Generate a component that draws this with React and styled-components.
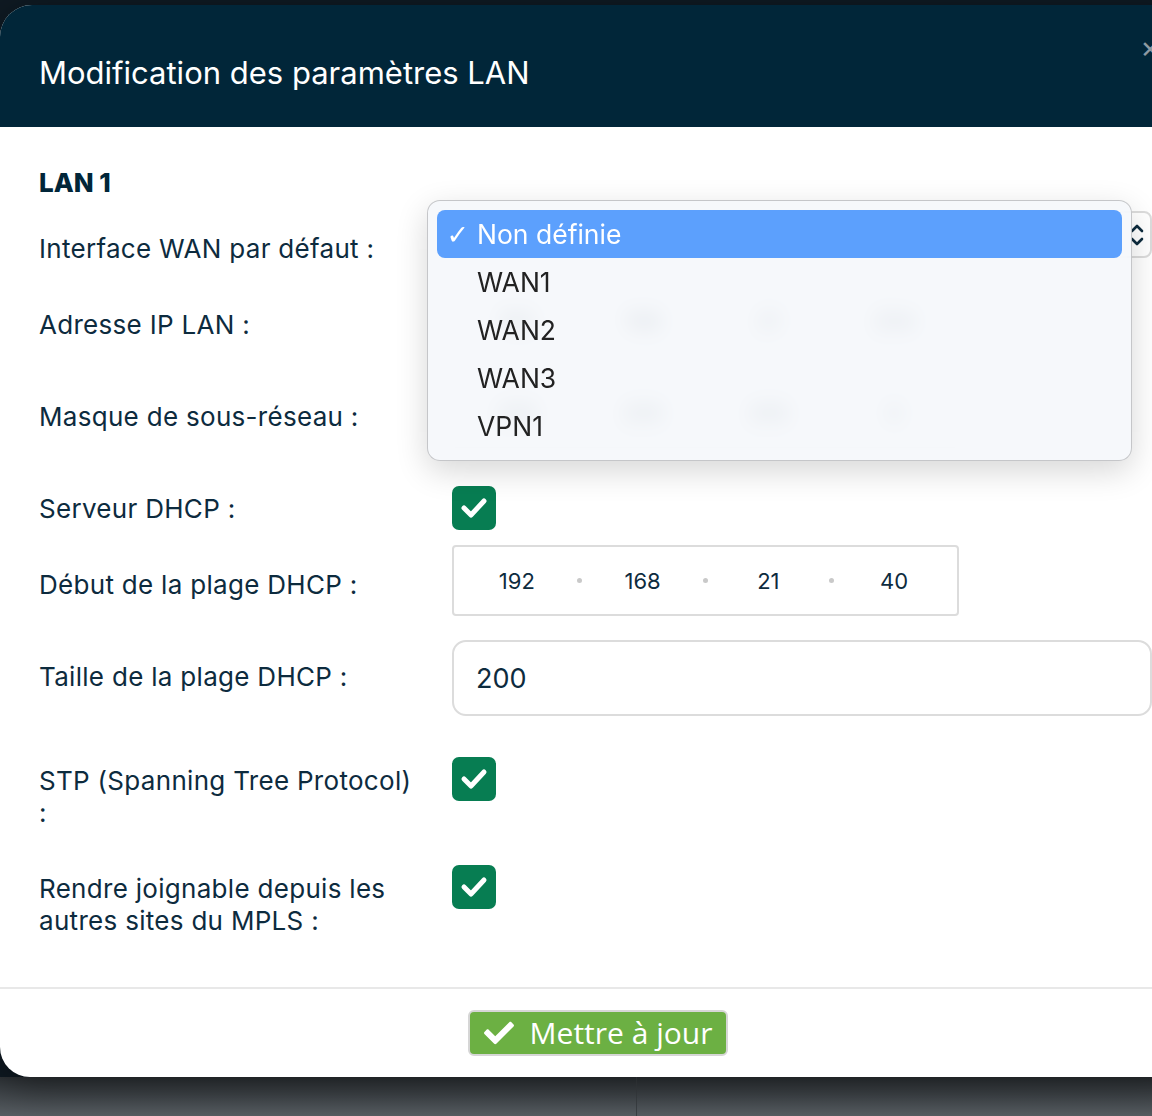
import React from "react";
import styled, { createGlobalStyle } from "styled-components";
import { FaCheck } from "react-icons/fa";

const GlobalStyle = createGlobalStyle`
  html, body { margin: 0; padding: 0; overflow: hidden; }
  body { background: #0f1a23; font-family: Inter, "Noto Sans", sans-serif; }
`;

const Page = styled.div`
  width: 1152px;
  height: 1116px;
  overflow: hidden;
  display: flex;
  flex-direction: column;
  padding-top: 5px;
  box-sizing: border-box;
`;

const Modal = styled.div`
  position: relative;
  flex-shrink: 0;
  width: 1196px;
  background: #fff;
  border-radius: 32px 32px 30px 30px;
  overflow: hidden;
  box-shadow: 0 10px 40px rgba(0, 0, 0, 0.45);
`;

const Header = styled.div`
  height: 122px;
  box-sizing: border-box;
  background: #012639;
  display: flex;
  align-items: center;
  justify-content: space-between;
  padding: 12px 36px 0 39px;
`;

const Title = styled.h1`
  margin: 0;
  font-size: 31px;
  font-weight: 400;
  color: #fff;
`;

const Close = styled.span`
  color: #8d99a3;
  font-size: 30px;
  line-height: 1;
  margin-top: -50px;
`;

const Body = styled.div`
  padding: 40px 0 50px 39px;
`;

const Section = styled.h2`
  margin: 0;
  font-size: 26px;
  line-height: 32px;
  font-weight: 800;
  color: #012639;
`;

const Row = styled.div`
  display: grid;
  grid-template-columns: 413px 700px;
  align-items: start;
  margin-top: ${(p) => p.$mt}px;
`;

const Label = styled.div`
  padding: ${(p) => p.$pt}px 28px 0 0;
  font-size: 26px;
  line-height: 32px;
  letter-spacing: 0.3px;
  color: #0d2b3e;
`;

const Select = styled.div`
  height: 47px;
  box-sizing: border-box;
  border: 2px solid #dcdcdc;
  border-radius: 8px;
  display: flex;
  align-items: center;
  justify-content: flex-end;
  padding-right: 5px;
  color: #0d2b3e;
`;

const IpBox = styled.div`
  width: 507px;
  height: 71px;
  box-sizing: border-box;
  border: 2px solid #dcdcdc;
  border-radius: 4px;
  display: flex;
  align-items: center;
`;

const Segment = styled.span`
  flex: 1;
  text-align: center;
  font-size: 22px;
  color: #0d2b3e;
`;

const Dot = styled.span`
  width: 0;
  display: flex;
  justify-content: center;
  &::before {
    content: "";
    flex-shrink: 0;
    width: 5px;
    height: 5px;
    border-radius: 50%;
    background: #c9c9c9;
  }
`;

const TextInput = styled.div`
  height: 76px;
  box-sizing: border-box;
  border: 2px solid #dcdcdc;
  border-radius: 14px;
  display: flex;
  align-items: center;
  padding-left: 22px;
  font-size: 27px;
  color: #0d2b3e;
`;

const Checkbox = styled.div`
  width: 44px;
  height: 44px;
  border-radius: 7px;
  background: #077d52;
  display: flex;
  align-items: center;
  justify-content: center;
`;

const Footer = styled.div`
  border-top: 2px solid #e8e8e8;
  padding: 21px 0;
  display: flex;
  justify-content: center;
`;

const Button = styled.button`
  height: 46px;
  box-sizing: border-box;
  border: 2px solid #d6d6d6;
  border-radius: 6px;
  background: #6cb043;
  color: #fff;
  display: flex;
  align-items: center;
  gap: 16px;
  padding: 0 14px 0 14px;
  font-family: "Open Sans", sans-serif;
  font-size: 30px;
  line-height: 1;
`;

const Popup = styled.div`
  position: absolute;
  top: 195px;
  left: 427px;
  width: 705px;
  height: 261px;
  box-sizing: border-box;
  padding: 9px 9px;
  border: 1px solid rgba(0, 0, 0, 0.2);
  border-radius: 13px;
  background: rgba(245, 247, 250, 0.86);
  backdrop-filter: blur(10px);
  box-shadow: 0 10px 32px rgba(0, 0, 0, 0.16);
`;

const Option = styled.div`
  height: 48px;
  display: flex;
  align-items: center;
  border-radius: 8px;
  font-size: 26.5px;
  color: ${(p) => (p.$active ? "#fff" : "#222")};
  background: ${(p) => (p.$active ? "#5ca0fd" : "transparent")};
`;

const Tick = styled.span`
  width: 40px;
  text-align: right;
  padding-right: 8px;
  box-sizing: border-box;
  font-family: "DejaVu Sans", sans-serif;
  font-weight: bold;
  font-size: 27px;
`;

const Shade = styled.div`
  flex: 1;
  display: flex;
  padding-left: 636px;
  background: linear-gradient(#2f3438, #585e63);
`;

const Divider = styled.div`
  width: 1px;
  background: #3b4044;
`;

const Check = () => (
  <svg width="28" height="24" viewBox="0 0 28 24">
    <polyline points="4,12 11,19 24,5" fill="none" stroke="#fff" strokeWidth="5" strokeLinecap="round" strokeLinejoin="round" />
  </svg>
);

const Chevrons = () => (
  <svg width="16" height="28" viewBox="0 0 16 28">
    <path d="M3 10 L8 5 L13 10 M3 18 L8 23 L13 18" fill="none" stroke="#0d2b3e" strokeWidth="2.6" strokeLinecap="round" strokeLinejoin="round" />
  </svg>
);

function Ip({ parts }) {
  return (
    <IpBox>
      {parts.map((p, i) => (
        <React.Fragment key={i}>
          {i > 0 && <Dot />}
          <Segment>{p}</Segment>
        </React.Fragment>
      ))}
    </IpBox>
  );
}

const options = ["Non définie", "WAN1", "WAN2", "WAN3", "VPN1"];

export default function App() {
  return (
    <Page>
      <GlobalStyle />
      <Modal>
        <Header>
          <Title>Modification des paramètres LAN</Title>
          <Close>×</Close>
        </Header>
        <Body>
          <Section>LAN 1</Section>
          <Row $mt={12}>
            <Label $pt={22}>Interface WAN par défaut :</Label>
            <Select>
              <Chevrons />
            </Select>
          </Row>
          <Row $mt={20}>
            <Label $pt={24}>Adresse IP LAN :</Label>
            <Ip parts={["192", "168", "21", "254"]} />
          </Row>
          <Row $mt={21}>
            <Label $pt={24}>Masque de sous-réseau :</Label>
            <Ip parts={["255", "255", "255", "0"]} />
          </Row>
          <Row $mt={38}>
            <Label $pt={7}>Serveur DHCP :</Label>
            <Checkbox>
              <Check />
            </Checkbox>
          </Row>
          <Row $mt={15}>
            <Label $pt={24}>Début de la plage DHCP :</Label>
            <Ip parts={["192", "168", "21", "40"]} />
          </Row>
          <Row $mt={24}>
            <Label $pt={21}>Taille de la plage DHCP :</Label>
            <TextInput>200</TextInput>
          </Row>
          <Row $mt={41}>
            <Label $pt={8}>STP (Spanning Tree Protocol) :</Label>
            <Checkbox>
              <Check />
            </Checkbox>
          </Row>
          <Row $mt={36}>
            <Label $pt={8}>Rendre joignable depuis les autres sites du MPLS :</Label>
            <Checkbox>
              <Check />
            </Checkbox>
          </Row>
        </Body>
        <Footer>
          <Button>
            <FaCheck size={30} />
            Mettre à jour
          </Button>
        </Footer>
        <Popup>
          {options.map((o, i) => (
            <Option key={o} $active={i === 0}>
              <Tick>{i === 0 ? "✓" : ""}</Tick>
              {o}
            </Option>
          ))}
        </Popup>
      </Modal>
      <Shade>
        <Divider />
      </Shade>
    </Page>
  );
}
